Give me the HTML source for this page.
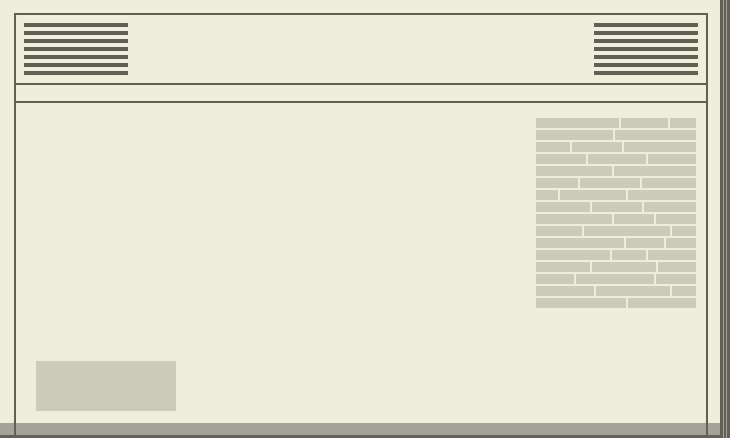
<!DOCTYPE html><html><head><style>
*{margin:0;padding:0}
body{width:730px;height:438px;background:#efeddc;position:relative;overflow:hidden}
div{position:absolute}
.d{background:#625f55}
.b{background:#cccabb;height:10px;left:536px;width:160px}
.j{background:#efeddc;width:2px;height:10px;top:0}
</style></head><body>
<div style="left:0;top:423px;width:720px;height:12px;background:#a5a397"></div>
<div class="d" style="left:14px;top:13px;width:694px;height:2px"></div>
<div class="d" style="left:14px;top:13px;width:2px;height:425px"></div>
<div class="d" style="left:706px;top:13px;width:2px;height:425px"></div>
<div class="d" style="left:14px;top:83px;width:694px;height:2px"></div>
<div class="d" style="left:14px;top:101px;width:694px;height:2px"></div>
<div style="left:24px;top:23px;width:104px;height:52px;background:repeating-linear-gradient(#625f55 0 4px,transparent 4px 8px)"></div>
<div style="left:594px;top:23px;width:104px;height:52px;background:repeating-linear-gradient(#625f55 0 4px,transparent 4px 8px)"></div>
<div style="left:36px;top:361px;width:140px;height:50px;background:#cccabb"></div>
<div class="d" style="left:0;top:435px;width:730px;height:3px"></div>
<div class="d" style="left:720px;top:0;width:3px;height:438px"></div>
<div class="d" style="left:724px;top:0;width:2px;height:438px"></div>
<div class="d" style="left:727px;top:0;width:3px;height:438px"></div>
<div style="left:723px;top:0;width:1px;height:438px;background:#a5a397"></div>
<div style="left:726px;top:0;width:1px;height:438px;background:#a5a397"></div>
<script>
var J=[[620,669],[614],[571,623],[587,647],[613],[579,641],[559,627],[591,643],[613,655],[583,671],[625,665],[611,647],[591,657],[575,655],[595,671],[627]];
var h='';J.forEach(function(r,i){h+='<div class="b" style="top:'+(118+i*12)+'px">';r.forEach(function(x){h+='<div class="j" style="left:'+(x-537)+'px"></div>'});h+='</div>'});
document.body.insertAdjacentHTML('beforeend',h);
</script>
</body></html>
